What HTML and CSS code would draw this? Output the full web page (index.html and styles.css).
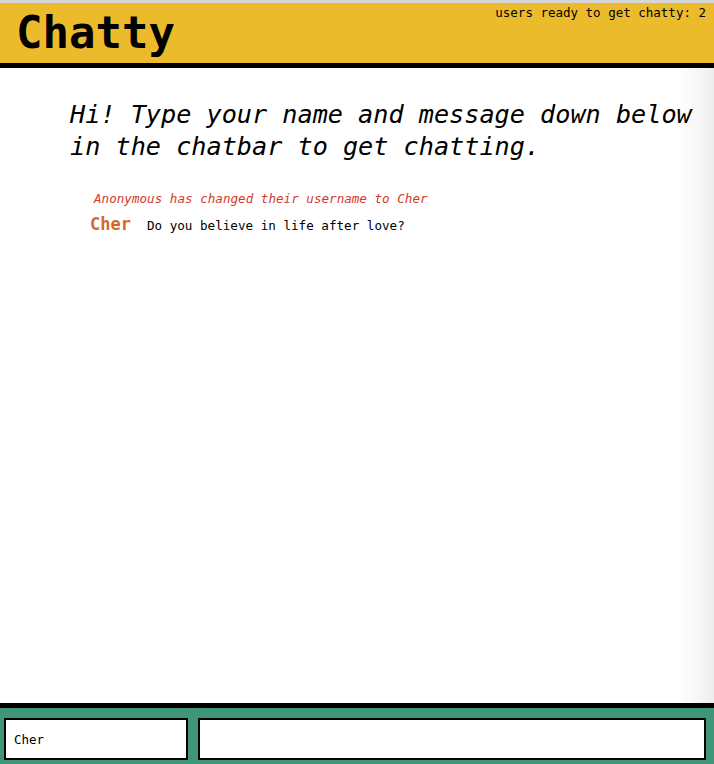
FILE: index.html
```html
<!DOCTYPE html>
<html>
<head>
<meta charset="utf-8">
<link rel="stylesheet" href="styles.css">
</head>
<body>
<div class="page">
  <header class="topbar">
    <h1 class="logo">Chatty</h1>
    <div class="count">users ready to get chatty: 2</div>
  </header>
  <main class="chat">
    <h2 class="intro">Hi! Type your name and message down below in the chatbar to get chatting.</h2>
    <ul class="messages">
      <li class="notice">Anonymous has changed their username to Cher</li>
      <li class="message"><span class="user">Cher</span><span class="text">Do you believe in life after love?</span></li>
    </ul>
  </main>
  <footer class="chatbar">
    <input class="name" type="text" value="Cher">
    <input class="msg" type="text" value="">
  </footer>
</div>
</body>
</html>
```
FILE: styles.css
```css
html, body {
  margin: 0;
  padding: 0;
  height: 100%;
}
body {
  font-family: "DejaVu Sans Mono", monospace;
  background: #fff;
}
.page {
  height: 100%;
  display: flex;
  flex-direction: column;
  border-top: 3px solid #d6d6d6;
  box-sizing: border-box;
}
.topbar {
  height: 60px;
  background: #ecbb2c;
  border-bottom: 5px solid #000;
  display: flex;
  justify-content: space-between;
  align-items: flex-start;
  padding: 0 8px 0 16px;
  flex: none;
}
.logo {
  margin: 0;
  font-size: 44px;
  font-weight: bold;
  line-height: 60px;
  letter-spacing: 0;
  color: #000;
}
.count {
  font-size: 12.5px;
  line-height: 17px;
  padding-top: 1px;
  color: #000;
}
.chat {
  flex: 1;
  padding: 31px 0 0 0;
  background: linear-gradient(to right, #fff 0, #fff 676px, #f7f7f7 698px, #ededed 714px);
}
.intro {
  margin: 0 0 0 70px;
  font-size: 25.2px;
  line-height: 32px;
  font-weight: normal;
  font-style: italic;
  color: #000;
  width: 640px;
}
.messages {
  list-style: none;
  margin: 27px 0 0 0;
  padding: 0;
}
.notice {
  margin-left: 94px;
  font-size: 12.6px;
  line-height: 18px;
  font-style: italic;
  color: #d23a2c;
}
.message {
  margin-left: 90px;
  margin-top: 4px;
  display: flex;
  align-items: baseline;
  gap: 16px;
  line-height: 24px;
}
.user {
  font-size: 17px;
  font-weight: bold;
  color: #d2692a;
}
.text {
  font-size: 12.6px;
  color: #000;
}
.chatbar {
  flex: none;
  height: 61px;
  box-sizing: border-box;
  background: #3e957a;
  border-top: 5px solid #000;
  display: flex;
  align-items: flex-end;
  padding: 0 8px 4px 4px;
  gap: 10px;
}
.chatbar input {
  box-sizing: border-box;
  height: 42px;
  border: 2px solid #000;
  background: #fff;
  font-family: "DejaVu Sans Mono", monospace;
  font-size: 12.5px;
  color: #000;
  padding: 0 8px;
  margin: 0;
  outline: none;
}
.name {
  width: 184px;
}
.msg {
  flex: 1;
}
```
